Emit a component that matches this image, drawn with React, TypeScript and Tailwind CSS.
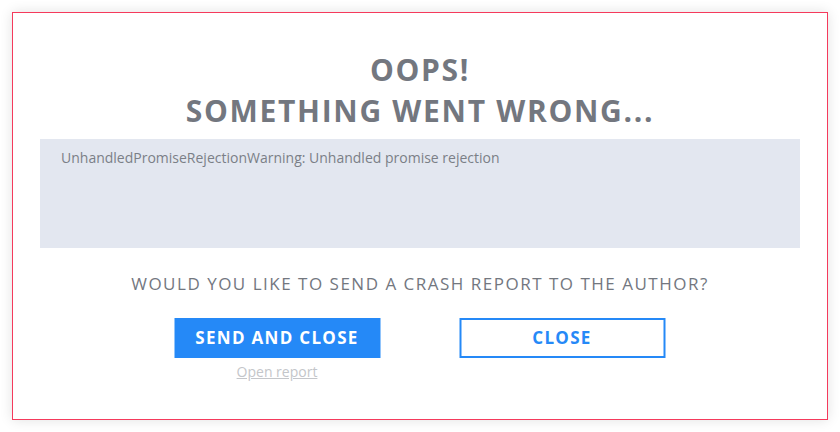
import React from "react";

export default function App() {
  return (
    <div className="w-[840px] h-[432px] bg-white p-[12px]" style={{ fontFamily: '"Open Sans", sans-serif' }}>
      <div className="w-[816px] h-[408px] border border-[#f53a5c] bg-white shadow-[0_0_12px_rgba(0,0,0,0.12)] px-[27px] pt-[36px] flex flex-col items-center">
        <h1 className="text-[30px] leading-[41px] font-bold tracking-[1.7px] text-[#73777f] text-center">
          OOPS!
          <br />
          SOMETHING WENT WRONG...
        </h1>
        <div className="mt-[8px] w-[760px] h-[109px] bg-[#e3e7f0] pl-[21px] pt-[8px] text-[14px] text-[#7b7f87]">
          UnhandledPromiseRejectionWarning: Unhandled promise rejection
        </div>
        <p className="mt-[25px] text-[17px] leading-[22px] tracking-[1.5px] text-[#73777f]">
          WOULD YOU LIKE TO SEND A CRASH REPORT TO THE AUTHOR?
        </p>
        <div className="mt-[23px] flex gap-[79px] -translate-x-[0.5px]">
          <div className="flex flex-col items-center">
            <button className="w-[206px] h-[40px] bg-[#2589f7] text-white text-[17px] font-bold tracking-[1.3px]">
              SEND AND CLOSE
            </button>
            <a className="mt-[3px] text-[14px] text-[#c4c6ca] underline">Open report</a>
          </div>
          <button className="w-[206px] h-[40px] border-2 border-[#2589f7] text-[#2589f7] text-[17px] font-bold tracking-[1.3px]">
            CLOSE
          </button>
        </div>
      </div>
    </div>
  );
}
